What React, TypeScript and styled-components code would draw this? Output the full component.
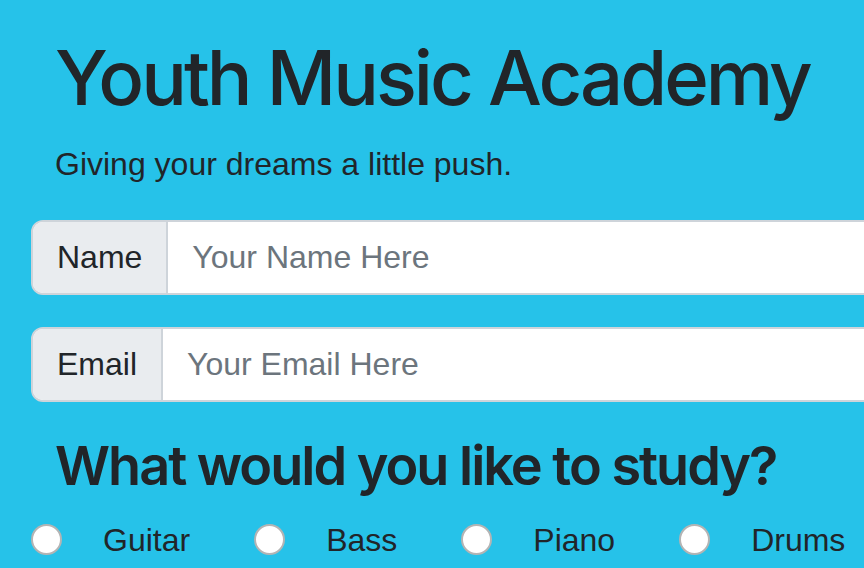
import * as React from 'react';
import styled, { createGlobalStyle } from 'styled-components';

const GlobalStyle = createGlobalStyle`
	html, body {
		margin: 0;
		padding: 0;
		overflow: hidden;
		background: #26c2e9;
	}
	body {
		font-family: 'Liberation Sans', Arial, sans-serif;
		color: #212529;
	}
	* {
		box-sizing: border-box;
	}
`;

const instruments = ['Guitar', 'Bass', 'Piano', 'Drums'];

const App = () => {
	return (
		<>
			<GlobalStyle />
			<Page>
				<Header>
					<Title>Youth Music Academy</Title>
					<Lead>Giving your dreams a little push.</Lead>
				</Header>
				<Form>
					<InputGroup>
						<GroupLabel>Name</GroupLabel>
						<TextInput type="text" placeholder="Your Name Here" />
					</InputGroup>
					<InputGroup>
						<GroupLabel>Email</GroupLabel>
						<TextInput type="email" placeholder="Your Email Here" />
					</InputGroup>
					<Question>What would you like to study?</Question>
					<RadioRow>
						{instruments.map(name => (
							<RadioItem key={name}>
								<Radio type="radio" name="instrument" value={name} />
								<RadioLabel>{name}</RadioLabel>
							</RadioItem>
						))}
					</RadioRow>
				</Form>
			</Page>
		</>
	);
};

export default App;

const Page = styled.div`
	width: 1100px;
	padding: 32px 0 0 31px;
`;

const Header = styled.div`
	padding-left: 24px;
`;

const Title = styled.h1`
	margin: 0;
	font-family: Inter, 'Liberation Sans', sans-serif;
	font-size: 76px;
	font-weight: 500;
	line-height: 1.2;
	letter-spacing: -3px;
`;

const Lead = styled.p`
	margin: 17px 0 0;
	font-size: 32px;
	line-height: 1.5;
`;

const Form = styled.form`
	margin-top: 32px;
`;

const InputGroup = styled.div`
	display: flex;
	width: 1000px;
	height: 75px;
	margin-bottom: 32px;
	border: 2px solid #ced4da;
	border-radius: 12px;
	overflow: hidden;
	background: #fff;
`;

const GroupLabel = styled.span`
	display: flex;
	align-items: center;
	padding: 0 24px;
	background: #e9ecef;
	border-right: 2px solid #ced4da;
	font-size: 32px;
	color: #212529;
`;

const TextInput = styled.input`
	flex: 1;
	border: none;
	outline: none;
	padding: 0 24px;
	font-family: 'Liberation Sans', Arial, sans-serif;
	font-size: 32px;
	color: #212529;
	background: #fff;

	&::placeholder {
		color: #6c757d;
	}
`;

const Question = styled.h3`
	margin: 2px 0 0;
	padding-left: 24px;
	font-family: Inter, 'Liberation Sans', sans-serif;
	font-size: 54px;
	font-weight: 600;
	line-height: 1.2;
	letter-spacing: -2px;
`;

const RadioRow = styled.div`
	display: flex;
	align-items: center;
	gap: 64px;
	margin-top: 17px;
`;

const RadioItem = styled.label`
	display: flex;
	align-items: center;
	gap: 41px;
	font-size: 32px;
	line-height: 1.5;
`;

const Radio = styled.input`
	appearance: none;
	margin: 0;
	width: 31px;
	height: 31px;
	border: 2px solid #b4b4b4;
	border-radius: 50%;
	background: #fff;
`;

const RadioLabel = styled.span`
	color: #212529;
`;
